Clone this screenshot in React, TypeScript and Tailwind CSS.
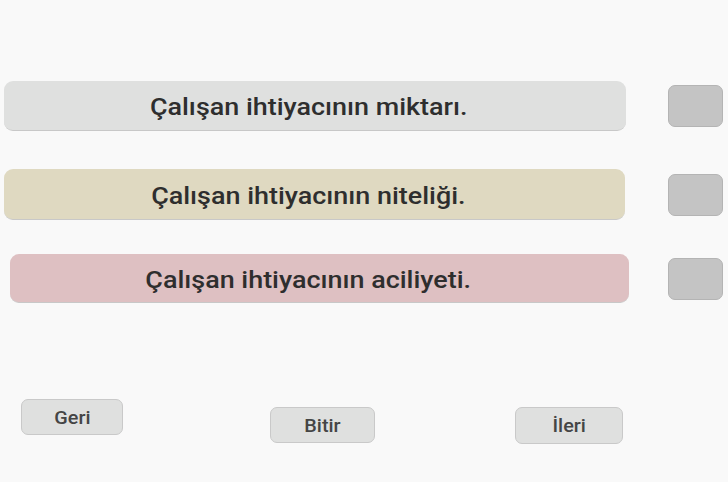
import React from "react";

const rows = [
  { text: "Çalışan ihtiyacının miktarı.", bg: "bg-[#dfe0df]", pad: "pl-[4px] pr-[102px]", mt: "mt-[81px]", h: "h-[50px]", tp: "pr-[12px]" },
  { text: "Çalışan ihtiyacının niteliği.", bg: "bg-[#dfd9c1]", pad: "pl-[4px] pr-[103px]", mt: "mt-[38px]", h: "h-[51px]", tp: "pr-[12px]" },
  { text: "Çalışan ihtiyacının aciliyeti.", bg: "bg-[#dec0c2]", pad: "pl-[10px] pr-[99px]", mt: "mt-[34px]", h: "h-[49px]", tp: "pr-[22px]" },
];

export default function App() {
  return (
    <div
      className="w-[728px] h-[482px] bg-[#f9f9f9] flex flex-col overflow-hidden"
      style={{ fontFamily: "Roboto, 'Noto Sans', sans-serif" }}
    >
      {rows.map((r, i) => (
        <div key={i} className={`relative ${r.mt} ${r.h}`}>
          <div className={`flex h-full ${r.pad}`}>
            <div
              className={`flex-1 ${r.bg} rounded-[9px] flex items-center justify-center pt-[6px] ${r.tp} text-[23px] font-medium text-[#2e2e2e] border-b border-[#c8c8c8]`}
            >
              <span className="inline-block scale-x-[1.17] whitespace-nowrap">{r.text}</span>
            </div>
          </div>
          <div className="absolute right-[5px] top-1/2 -translate-y-1/2 w-[55px] h-[42px] rounded-[7px] bg-[#c4c4c4] border border-[#b4b4b4]" />
        </div>
      ))}
      <div className="flex items-start pl-[21px] pr-[105px] mt-[96px] text-[18px] font-medium text-[#454545]">
        <div className="w-[102px] h-[36px] rounded-[7px] bg-[#dfe0df] border border-[#c9c9c9] flex items-center justify-center">
          <span className="inline-block scale-x-[1.1]">Geri</span>
        </div>
        <div className="ml-[147px] mt-[8px] w-[105px] h-[36px] rounded-[7px] bg-[#dfe0df] border border-[#c9c9c9] flex items-center justify-center">
          <span className="inline-block scale-x-[1.1]">Bitir</span>
        </div>
        <div className="ml-auto mt-[8px] w-[108px] h-[37px] rounded-[7px] bg-[#dfe0df] border border-[#c9c9c9] flex items-center justify-center">
          <span className="inline-block scale-x-[1.1]">İleri</span>
        </div>
      </div>
    </div>
  );
}
